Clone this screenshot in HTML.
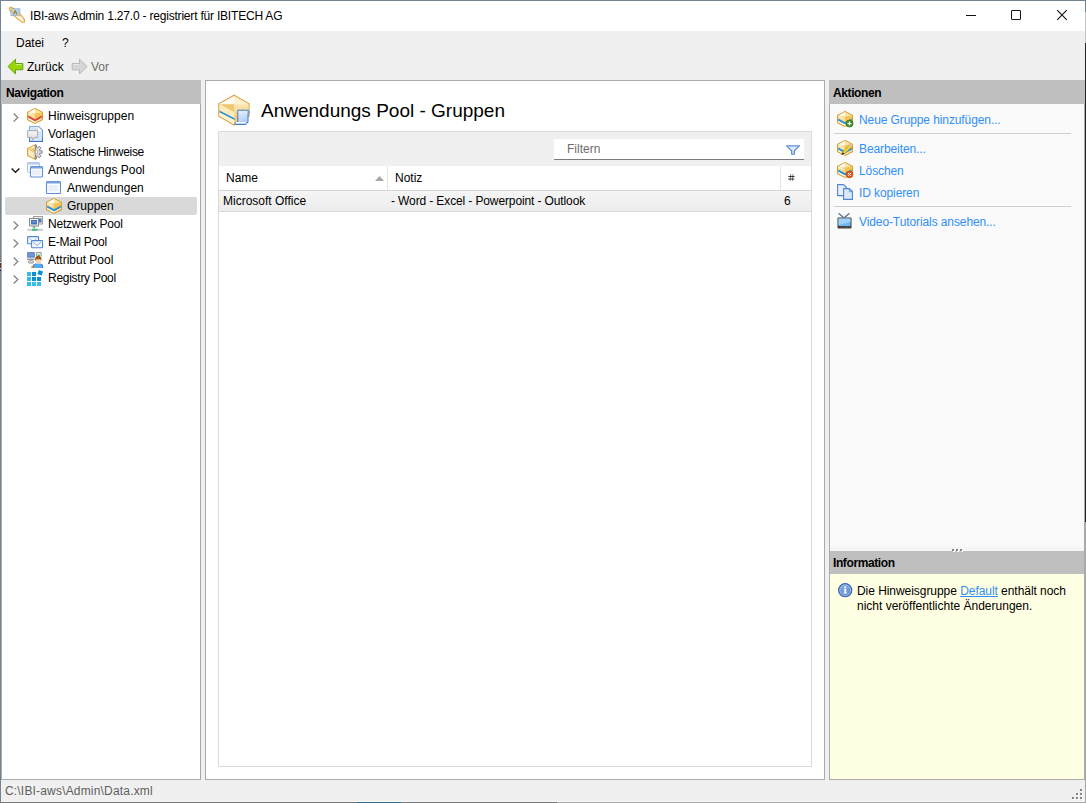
<!DOCTYPE html>
<html><head><meta charset="utf-8">
<style>
*{margin:0;padding:0;box-sizing:border-box}
html,body{width:1086px;height:803px;overflow:hidden;background:#f0f0f0;font-family:"Liberation Sans",sans-serif;font-size:12px;color:#000}
.a{position:absolute}
.t{position:absolute;white-space:nowrap;font-size:12px;line-height:14px}
.b{font-weight:bold;letter-spacing:-0.4px}
.lk{color:#2f8ff8}
.al{letter-spacing:-0.1px}
svg{position:absolute;display:block;overflow:visible}
</style></head><body>
<!-- window border -->
<div class="a" style="left:0;top:0;width:1086px;height:1px;background:#6f8596"></div>
<div class="a" style="left:0;top:0;width:1px;height:803px;background:#6f8596"></div>
<div class="a" style="left:1085px;top:0;width:1px;height:12px;background:#6f8596"></div>
<div class="a" style="left:1085px;top:12px;width:1px;height:31px;background:#c4c4c4"></div>
<div class="a" style="left:1085px;top:43px;width:1px;height:479px;background:#222"></div>
<div class="a" style="left:1085px;top:522px;width:1px;height:281px;background:#a9a9a9"></div>
<div class="a" style="left:1px;top:801px;width:1084px;height:1px;background:#f9f9f9"></div>
<div class="a" style="left:0;top:802px;width:557px;height:1px;background:#737373"></div>
<div class="a" style="left:357px;top:802px;width:44px;height:1px;background:#2c6c96"></div>
<div class="a" style="left:557px;top:802px;width:529px;height:1px;background:#a8a8a8"></div>
<div class="a" style="left:0;top:261px;width:1px;height:10px;background:linear-gradient(#3a6fb0 0,#3a6fb0 10%,#e8e0b0 10%,#e8e0b0 20%,#6a1a1a 20%,#8a2a1a 70%,#d8d090 70%,#d8d090 80%,#2a60a0 80%,#2a60a0 90%,#333 90%)"></div>
<!-- title bar -->
<div class="a" style="left:1px;top:1px;width:1084px;height:30px;background:#fff"></div>
<div class="a" style="left:4px;top:3px;width:24px;height:24px"><svg width="24" height="24" viewBox="0 0 24 24" style="left:0;top:0">
<ellipse cx="13" cy="11.8" rx="10.3" ry="2.6" transform="rotate(44 13 11.8)" fill="#fff8e6" stroke="#eaa844" stroke-width="1.2"/>
<rect x="7" y="5.8" width="9" height="7" fill="#b3cff0" stroke="#7896b8" stroke-width="0.5"/>
<path d="M6.5 5.5L16.5 13.5" stroke="#f3c878" stroke-width="1.4" opacity="0.8"/>
<path d="M9.5 11.2L11.2 7.8L13 11.2" fill="none" stroke="#9a8414" stroke-width="1.3"/>
</svg></div>
<div class="t" style="left:30px;top:9px;letter-spacing:-0.2px">IBI-aws Admin 1.27.0 - registriert für IBITECH AG</div>
<!-- window buttons -->
<div class="a" style="left:966px;top:15px;width:10px;height:1px;background:#111"></div>
<div class="a" style="left:1011px;top:10px;width:10px;height:10px;border:1px solid #111;border-radius:1px"></div>
<svg style="left:1057px;top:10px" width="10" height="10" viewBox="0 0 10 10"><path d="M0.2 0.2L9.8 9.8M9.8 0.2L0.2 9.8" stroke="#111" stroke-width="1.1"/></svg>

<!-- menu -->
<div class="t" style="left:16px;top:36px">Datei</div>
<div class="t" style="left:62px;top:36px">?</div>
<!-- toolbar -->
<div class="a" style="left:7px;top:59px;width:16px;height:16px"><svg width="16" height="16" viewBox="0 0 16 16" style="left:0;top:0">
<path d="M1 7.5L8.5 0.2V4.5H15.8V10.8H8.5V15L1 7.5Z" fill="#9ad600" stroke="#5fa515" stroke-width="1" stroke-linejoin="round"/>
<path d="M8.8 5.6H14.6" stroke="#d8f39a" stroke-width="0.9"/>
</svg></div>
<div class="t" style="left:27px;top:60px">Zurück</div>
<div class="a" style="left:72px;top:59px;width:16px;height:16px"><svg width="16" height="16" viewBox="0 0 16 16" style="left:0;top:0">
<path d="M15 7.5L7.5 0.2V4.5H0.2V10.8H7.5V15L15 7.5Z" fill="#d6d6d6" stroke="#b8b8b8" stroke-width="1" stroke-linejoin="round"/>
<path d="M1.4 5.6H7.2" stroke="#ececec" stroke-width="0.9"/>
</svg></div>
<div class="t" style="left:91px;top:60px;color:#6d6d6d">Vor</div>

<!-- NAV PANEL -->
<div class="a" style="left:1px;top:80px;width:200px;height:700px;border:1px solid #aaaaaa;border-top:none;background:#fff"></div>
<div class="a" style="left:1px;top:80px;width:200px;height:24px;background:#bfbfbf"></div>
<div class="t b" style="left:6px;top:86px">Navigation</div>
<div class="a" style="left:5px;top:197px;width:192px;height:18px;background:#d9d9d9;border-radius:2px"></div>
<div class="t" style="left:48px;top:109px">Hinweisgruppen</div>
<div class="a" style="left:27px;top:108px;width:16px;height:16px"><svg width="16" height="16" viewBox="0 0 16 16" style="left:0;top:0">
<path d="M8 0.6L15.4 4.4V11.6L8 15.4L0.6 11.6V4.4Z" fill="#fff3c8" stroke="#d49b30" stroke-width="1.1"/>
<path d="M1.2 4.6L8 1.1L8 5.2Z" fill="#fffdf2"/>
<path d="M1.2 4.8L8 5.2L8 11.8L1.2 8.3Z" fill="#f4d693"/>
<path d="M1.2 4.8L5 5L8 9L1.2 7Z" fill="#fbe9bb"/>
<path d="M8 1.1L14.8 4.6V8.3L8 11.8Z" fill="#f3c452"/>
<path d="M8 1.1L14.8 4.6L8 5.5Z" fill="#fbe3a0"/>
<path d="M1.2 7.6L8 11.2L14.8 7.6V9.8L8 13.4L1.2 9.8Z" fill="#d8473a"/>
<path d="M1.2 10L8 13.6V14.8L1.2 11.2Z" fill="#fffbe6"/>
</svg></div>
<svg style="left:13px;top:113px" width="6" height="9" viewBox="0 0 6 9"><path d="M0.7 0.5L4.8 4.5L0.7 8.5" fill="none" stroke="#858585" stroke-width="1.3"/></svg>
<div class="t" style="left:48px;top:127px">Vorlagen</div>
<div class="a" style="left:27px;top:126px;width:16px;height:16px"><svg width="16" height="16" viewBox="0 0 16 16" style="left:0;top:0">
<defs><linearGradient id="vdo" x1="0" y1="0" x2="0" y2="1"><stop offset="0" stop-color="#86aee6"/><stop offset="1" stop-color="#3b73c9"/></linearGradient>
<linearGradient id="vbu" x1="0" y1="0" x2="0" y2="1"><stop offset="0" stop-color="#f6f6f6"/><stop offset="1" stop-color="#dedede"/></linearGradient></defs>
<path d="M2.6 0.6H11.8L15.4 4.2V15.4H2.6Z" fill="#ffffff" stroke="url(#vdo)" stroke-width="1.2" stroke-linejoin="round"/>
<path d="M4 2H11V5.2H14V14H4Z" fill="#d3e5fb"/>
<path d="M0.6 4.6H10.6V11.4H7.6L5.4 14.4L5.2 11.4H0.6Z" fill="url(#vbu)" stroke="#ababab" stroke-width="1" stroke-linejoin="round"/>
</svg></div>
<div class="t" style="left:48px;top:145px;letter-spacing:-0.3px">Statische Hinweise</div>
<div class="a" style="left:27px;top:144px;width:16px;height:16px"><svg width="16" height="16" viewBox="0 0 16 16" style="left:0;top:0">
<path d="M8.3 0.8V15.4L0.6 11.5V4.6Z" fill="#fbecc4" stroke="#d9a233" stroke-width="1.1"/>
<path d="M1.3 5L8.3 1.6V9.6Z" fill="#f0c868"/>
<path d="M1.3 5L8.3 1.6V4Z" fill="#fdf3d6"/>
<path d="M8.30 1.10 L8.74 1.11 L9.18 1.16 L9.62 1.23 L9.41 3.54 L9.85 3.67 L10.27 3.84 L10.67 4.06 L12.16 2.28 L12.86 2.82 L13.48 3.44 L14.02 4.14 L12.24 5.63 L12.46 6.03 L12.63 6.45 L12.76 6.89 L15.07 6.68 L15.19 7.56 L15.19 8.44 L15.07 9.32 L12.76 9.11 L12.63 9.55 L12.46 9.97 L12.24 10.37 L14.02 11.86 L13.48 12.56 L12.86 13.18 L12.16 13.72 L10.67 11.94 L10.27 12.16 L9.85 12.33 L9.41 12.46 L9.62 14.77 L9.18 14.84 L8.74 14.89 L8.30 14.90 Z" fill="#e2e2e2" stroke="#777" stroke-width="0.9" stroke-linejoin="round"/>
<path d="M8.3 5.6A2.4 2.4 0 0 1 8.3 10.4Z" fill="#ffffff" stroke="#8a8a8a" stroke-width="0.6"/>
</svg></div>
<div class="t" style="left:48px;top:163px">Anwendungs Pool</div>
<div class="a" style="left:27px;top:162px;width:16px;height:16px"><svg width="16" height="16" viewBox="0 0 16 16" style="left:0;top:0">
<rect x="0.5" y="0.5" width="12" height="10" rx="1" fill="#f6f9fd" stroke="#a9c3ea" stroke-width="1"/>
<rect x="0.5" y="0.5" width="12" height="2" fill="#b6cdef"/>
<rect x="3.5" y="4.5" width="12" height="10.5" rx="1" fill="#fff" stroke="#5f8fd6" stroke-width="1.1"/>
<rect x="3.5" y="4.5" width="12" height="2" fill="#77a1e0"/>
<rect x="5" y="7.5" width="9" height="6" fill="#eaeff8"/>
</svg></div>
<svg style="left:11px;top:168px" width="9" height="6" viewBox="0 0 9 6"><path d="M0.6 0.4L4.5 4.3L8.4 0.4" fill="none" stroke="#1e1e1e" stroke-width="1.45"/></svg>
<div class="t" style="left:67px;top:181px">Anwendungen</div>
<div class="a" style="left:46px;top:180px;width:16px;height:16px"><svg width="16" height="16" viewBox="0 0 16 16" style="left:0;top:0">
<rect x="0.5" y="1.5" width="14" height="12" rx="1" fill="#fff" stroke="#5f8fd6" stroke-width="1.1"/>
<rect x="0.5" y="1.5" width="14" height="2" fill="#77a1e0"/>
<rect x="2.5" y="5" width="10" height="6.5" fill="#eaeff8"/>
</svg></div>
<div class="t" style="left:67px;top:199px">Gruppen</div>
<div class="a" style="left:46px;top:198px;width:16px;height:16px"><svg width="16" height="16" viewBox="0 0 16 16" style="left:0;top:0">
<path d="M8 0.6L15.4 4.4V11.6L8 15.4L0.6 11.6V4.4Z" fill="#fff3c8" stroke="#d49b30" stroke-width="1.1"/>
<path d="M1.2 4.6L8 1.1L8 5.2Z" fill="#fffdf2"/>
<path d="M1.2 4.8L8 5.2L8 11.8L1.2 8.3Z" fill="#f4d693"/>
<path d="M1.2 4.8L5 5L8 9L1.2 7Z" fill="#fbe9bb"/>
<path d="M8 1.1L14.8 4.6V8.3L8 11.8Z" fill="#f3c452"/>
<path d="M8 1.1L14.8 4.6L8 5.5Z" fill="#fbe3a0"/>
<path d="M1.2 7.6L8 11.2L14.8 7.6V9.8L8 13.4L1.2 9.8Z" fill="#2a90d4"/>
<path d="M1.2 10L8 13.6V14.8L1.2 11.2Z" fill="#fffbe6"/>
</svg></div>
<div class="t" style="left:48px;top:217px;letter-spacing:-0.2px">Netzwerk Pool</div>
<div class="a" style="left:27px;top:216px;width:16px;height:16px"><svg width="16" height="16" viewBox="0 0 16 16" style="left:0;top:0">
<rect x="6.5" y="0.5" width="9" height="7.5" fill="#ececec" stroke="#a0a0a0" stroke-width="1"/>
<rect x="12" y="2.5" width="2.5" height="4" fill="#4a78c4"/>
<rect x="2.5" y="2.5" width="9" height="7.5" fill="#f2f2f2" stroke="#8c8c8c" stroke-width="1"/>
<rect x="4" y="4" width="6" height="4.5" fill="#4673c0"/>
<rect x="4.8" y="5" width="4.4" height="1.6" fill="#6a92d4"/>
<path d="M5 10.8H9" stroke="#b0b0b0" stroke-width="1"/>
<rect x="6.3" y="10.5" width="1.6" height="2" fill="#3cbc7c"/>
<rect x="0.5" y="12.8" width="15.5" height="2" fill="#c8ccce"/>
<rect x="5" y="12.8" width="5.5" height="2" fill="#40c080"/>
</svg></div>
<svg style="left:13px;top:221px" width="6" height="9" viewBox="0 0 6 9"><path d="M0.7 0.5L4.8 4.5L0.7 8.5" fill="none" stroke="#858585" stroke-width="1.3"/></svg>
<div class="t" style="left:48px;top:235px;letter-spacing:-0.23px">E-Mail Pool</div>
<div class="a" style="left:27px;top:234px;width:16px;height:16px"><svg width="16" height="16" viewBox="0 0 16 16" style="left:0;top:0">
<rect x="0.6" y="2.6" width="11" height="7.2" rx="0.6" fill="#f4f8fe" stroke="#5287d4" stroke-width="1.1"/>
<path d="M2.2 4.2L6 7.6L9.8 4.2" fill="none" stroke="#8db0e6" stroke-width="0.8"/>
<rect x="4.6" y="6.6" width="11" height="7.2" rx="0.6" fill="#f7faff" stroke="#5287d4" stroke-width="1.1"/>
<path d="M6.2 8.2L10.1 11.6L14 8.2" fill="none" stroke="#6a98dc" stroke-width="0.85"/>
</svg></div>
<svg style="left:13px;top:239px" width="6" height="9" viewBox="0 0 6 9"><path d="M0.7 0.5L4.8 4.5L0.7 8.5" fill="none" stroke="#858585" stroke-width="1.3"/></svg>
<div class="t" style="left:48px;top:253px">Attribut Pool</div>
<div class="a" style="left:27px;top:252px;width:16px;height:16px"><svg width="16" height="16" viewBox="0 0 16 16" style="left:0;top:0">
<rect x="0.2" y="0.2" width="7.6" height="5.4" fill="#4b77bd"/>
<rect x="1.2" y="1.2" width="5.6" height="3.4" fill="#7199d8"/>
<rect x="0" y="6" width="7.5" height="2" fill="#c9c9c9"/>
<path d="M0 7.5H7.5" stroke="#8a8a8a" stroke-width="0.7"/>
<rect x="1.5" y="8.8" width="5" height="2.2" rx="1" fill="#f4f4f4" stroke="#7a7a7a" stroke-width="0.9"/>
<path d="M9.4 4.5V0.5H14.2V4.5" fill="#eeeeee" stroke="#8a8a8a" stroke-width="0.9"/>
<path d="M10.6 4.5C10.6 3 11 2.5 12 2.5C12.6 2.5 12.8 3 12.8 4.5Z" fill="#3aa63a"/>
<path d="M5.5 16C5.8 13 7 11.6 11.2 11.6C15.2 11.6 16 13 16 16Z" fill="#52aaf4"/>
<path d="M6 15.8C6.3 13 7.2 11.8 8.6 11.6M15.8 15.8C15.6 13 15 11.8 13.8 11.6" fill="none" stroke="#2440b8" stroke-width="0.9" stroke-dasharray="0.9 0.7"/>
<ellipse cx="11.3" cy="8.6" rx="3" ry="2.8" fill="#f7d2ac"/>
<path d="M8 8.5C7.8 5.2 9.5 4 11.3 4C13.5 4 14.8 5.3 14.6 8.5L13.8 7.6C12.8 7.2 11 7 9 7.4Z" fill="#9a5416"/>
<rect x="4.4" y="13.8" width="2" height="2.2" fill="#ec8a1e"/>
</svg></div>
<svg style="left:13px;top:257px" width="6" height="9" viewBox="0 0 6 9"><path d="M0.7 0.5L4.8 4.5L0.7 8.5" fill="none" stroke="#858585" stroke-width="1.3"/></svg>
<div class="t" style="left:48px;top:271px;letter-spacing:-0.27px">Registry Pool</div>
<div class="a" style="left:27px;top:270px;width:16px;height:16px"><svg width="16" height="16" viewBox="0 0 16 16" style="left:0;top:0">
<rect x="0" y="2" width="4" height="4" fill="#33bbef"/>
<rect x="5" y="2" width="4" height="4" fill="#0a90d0"/>
<rect x="0" y="7" width="4" height="4" fill="#33bbef"/>
<rect x="5" y="7" width="4" height="4" fill="#0a90d0"/>
<rect x="10" y="7" width="4" height="4" fill="#0a90d0"/>
<rect x="0" y="12" width="4" height="4" fill="#33bbef"/>
<rect x="5" y="12" width="4" height="4" fill="#33bbef"/>
<rect x="10" y="12" width="4" height="4" fill="#38bdf0"/>
<rect x="11" y="0.6" width="4.4" height="4.4" fill="#0a90d0" transform="rotate(18 13.2 2.8)"/>
</svg></div>
<svg style="left:13px;top:275px" width="6" height="9" viewBox="0 0 6 9"><path d="M0.7 0.5L4.8 4.5L0.7 8.5" fill="none" stroke="#858585" stroke-width="1.3"/></svg>

<!-- CENTER PANEL -->
<div class="a" style="left:205px;top:80px;width:620px;height:700px;border:1px solid #aaaaaa;background:#fff"></div>
<div class="a" style="left:218px;top:94px;width:32px;height:32px"><svg width="32" height="32" viewBox="0 0 32 32" style="left:0;top:0">
<defs>
<linearGradient id="scr" x1="0" y1="0" x2="0.3" y2="1"><stop offset="0" stop-color="#f2f7fe"/><stop offset="1" stop-color="#a9c9f1"/></linearGradient>
<linearGradient id="rf" x1="0" y1="0" x2="0" y2="1"><stop offset="0" stop-color="#fbe8b8"/><stop offset="1" stop-color="#f0c050"/></linearGradient>
</defs>
<path d="M16.2 1.2L31 9.9V22.2L16.2 31L0.8 22.2V9.9Z" fill="#fcefc6" stroke="#d8a247" stroke-width="1.2"/>
<path d="M1.5 10L16.2 1.9V10.2Z" fill="#fffaee"/>
<path d="M1.8 10.3L16.2 10.2V18.2Z" fill="#eec676"/>
<path d="M16.2 1.9L30.4 10.1L16.2 10.2Z" fill="#fdf0cf"/>
<path d="M16.2 10.2L30.4 10.1V22L16.2 30.2Z" fill="url(#rf)"/>
<path d="M1.5 10.6L16.2 18.4V30.2L1.5 21.8Z" fill="#fcebbb"/>
<path d="M1.5 16.6L16.6 24.3V26L1.5 18.4Z" fill="#2a90d2"/>
<path d="M1.5 18.6L16.2 26.2V30L1.5 21.8Z" fill="#fff4d2"/>
<path d="M19.8 16.2H29.8C31.6 16.2 31.6 19.6 30 20.2V28.5H28.3C28.8 29.5 28.5 30.5 27.5 30.5H17.6C16.4 30.5 16.4 28.4 17.6 28.4H19.8Z" fill="url(#scr)" stroke="#3f7bcf" stroke-width="1"/>
<path d="M17.8 28.6H28.2" stroke="#ffffff" stroke-width="1.2"/>
<path d="M29.2 16.8C30.5 17.2 30.5 19.2 29.2 19.6" fill="none" stroke="#6c9ade" stroke-width="0.8"/>
</svg></div>
<div class="t" style="left:261px;top:100px;font-size:19px;line-height:22px">Anwendungs Pool - Gruppen</div>
<!-- grid -->
<div class="a" style="left:218px;top:131px;width:594px;height:636px;border:1px solid #dadada;background:#fff"></div>
<div class="a" style="left:219px;top:132px;width:592px;height:34px;background:#f0f0f0"></div>
<div class="a" style="left:554px;top:139px;width:250px;height:21px;background:#fff;border-bottom:1px solid #7a7a7a"></div>
<div class="t" style="left:567px;top:142px;color:#6d6d6d">Filtern</div>
<div class="a" style="left:786px;top:145px;width:14px;height:10px"><svg width="14" height="10" viewBox="0 0 14 10" style="left:0;top:0">
<path d="M0.6 0.8H13.4L8.3 5.8V9.3H5.7V5.8Z" fill="#dbe9fb" stroke="#4a7fd0" stroke-width="1.1" stroke-linejoin="round"/>
<path d="M1 1H13" stroke="#8db2e8" stroke-width="1"/>
</svg></div>
<div class="a" style="left:219px;top:166px;width:591px;height:24px;background:#fff"></div>
<div class="a" style="left:387px;top:166px;width:1px;height:24px;background:#e5e5e5"></div>
<div class="a" style="left:780px;top:166px;width:1px;height:24px;background:#e5e5e5"></div>
<div class="a" style="left:219px;top:190px;width:592px;height:1px;background:#d5d5d5"></div>
<div class="a" style="left:219px;top:191px;width:592px;height:20px;background:linear-gradient(#f5f5f5,#ececec)"></div>
<div class="a" style="left:219px;top:211px;width:592px;height:1px;background:#d9d9d9"></div>
<div class="t" style="left:226px;top:171px">Name</div>
<div class="t" style="left:395px;top:171px">Notiz</div>
<svg style="left:788px;top:174px" width="7" height="7" viewBox="0 0 7 7"><path d="M2.7 0.2L2.1 6.8M5 0.2L4.4 6.8" stroke="#555" stroke-width="0.8"/><path d="M0.4 2.5H6.6M0.2 5H6.4" stroke="#222" stroke-width="0.9"/></svg>
<svg style="left:375px;top:176px" width="9" height="5" viewBox="0 0 9 5"><path d="M4.5 0L9 5H0Z" fill="#a6a6a6"/></svg>
<div class="t" style="left:223px;top:194px">Microsoft Office</div>
<div class="t" style="left:391px;top:194px;letter-spacing:-0.12px">- Word - Excel - Powerpoint - Outlook</div>
<div class="t" style="left:784px;top:194px">6</div>

<!-- RIGHT PANEL -->
<div class="a" style="left:829px;top:80px;width:256px;height:700px;border:1px solid #aaaaaa;border-top:none;border-right:1px solid #aaaaaa;background:#fafafa"></div>
<div class="a" style="left:829px;top:80px;width:256px;height:24px;background:#bfbfbf"></div>
<div class="t b" style="left:833px;top:86px">Aktionen</div>
<div class="a" style="left:837px;top:111px;width:16px;height:16px"><svg width="16" height="16" viewBox="0 0 16 16" style="left:0;top:0">
<path d="M8 0.6L15.4 4.4V11.6L8 15.4L0.6 11.6V4.4Z" fill="#fff3c8" stroke="#d49b30" stroke-width="1.1"/>
<path d="M1.2 4.6L8 1.1L8 5.2Z" fill="#fffdf2"/>
<path d="M1.2 4.8L8 5.2L8 11.8L1.2 8.3Z" fill="#f4d693"/>
<path d="M1.2 4.8L5 5L8 9L1.2 7Z" fill="#fbe9bb"/>
<path d="M8 1.1L14.8 4.6V8.3L8 11.8Z" fill="#f3c452"/>
<path d="M8 1.1L14.8 4.6L8 5.5Z" fill="#fbe3a0"/>
<path d="M1.2 7.6L8 11.2L14.8 7.6V9.8L8 13.4L1.2 9.8Z" fill="#2a90d4"/>
<path d="M1.2 10L8 13.6V14.8L1.2 11.2Z" fill="#fffbe6"/>
<circle cx="12.5" cy="12.5" r="3.5" fill="#45952a" stroke="#2f7418" stroke-width="0.8"/><path d="M12.5 10.5V14.5M10.5 12.5H14.5" stroke="#fff" stroke-width="1.2"/></svg></div>
<div class="a" style="left:837px;top:140px;width:16px;height:16px"><svg width="16" height="16" viewBox="0 0 16 16" style="left:0;top:0">
<path d="M8 0.6L15.4 4.4V11.6L8 15.4L0.6 11.6V4.4Z" fill="#fff3c8" stroke="#d49b30" stroke-width="1.1"/>
<path d="M1.2 4.6L8 1.1L8 5.2Z" fill="#fffdf2"/>
<path d="M1.2 4.8L8 5.2L8 11.8L1.2 8.3Z" fill="#f4d693"/>
<path d="M1.2 4.8L5 5L8 9L1.2 7Z" fill="#fbe9bb"/>
<path d="M8 1.1L14.8 4.6V8.3L8 11.8Z" fill="#f3c452"/>
<path d="M8 1.1L14.8 4.6L8 5.5Z" fill="#fbe3a0"/>
<path d="M1.2 7.6L8 11.2L14.8 7.6V9.8L8 13.4L1.2 9.8Z" fill="#2a90d4"/>
<path d="M1.2 10L8 13.6V14.8L1.2 11.2Z" fill="#fffbe6"/>
<path d="M4.5 14.5L6 11.5L13 4.5L15 6.5L8 13.5Z" fill="#f2d638" stroke="#b08a2a" stroke-width="0.7"/><path d="M4.3 14.8L5.8 12.2L7.6 13.8Z" fill="#3a2a1a"/><circle cx="14" cy="5.5" r="1.3" fill="#f0c0b0"/></svg></div>
<div class="a" style="left:837px;top:162px;width:16px;height:16px"><svg width="16" height="16" viewBox="0 0 16 16" style="left:0;top:0">
<path d="M8 0.6L15.4 4.4V11.6L8 15.4L0.6 11.6V4.4Z" fill="#fff3c8" stroke="#d49b30" stroke-width="1.1"/>
<path d="M1.2 4.6L8 1.1L8 5.2Z" fill="#fffdf2"/>
<path d="M1.2 4.8L8 5.2L8 11.8L1.2 8.3Z" fill="#f4d693"/>
<path d="M1.2 4.8L5 5L8 9L1.2 7Z" fill="#fbe9bb"/>
<path d="M8 1.1L14.8 4.6V8.3L8 11.8Z" fill="#f3c452"/>
<path d="M8 1.1L14.8 4.6L8 5.5Z" fill="#fbe3a0"/>
<path d="M1.2 7.6L8 11.2L14.8 7.6V9.8L8 13.4L1.2 9.8Z" fill="#2a90d4"/>
<path d="M1.2 10L8 13.6V14.8L1.2 11.2Z" fill="#fffbe6"/>
<circle cx="12.5" cy="12.4" r="3.4" fill="#e3581c" stroke="#bb4010" stroke-width="0.7"/><path d="M11.1 11L13.9 13.8M13.9 11L11.1 13.8" stroke="#fff" stroke-width="1"/></svg></div>
<div class="a" style="left:837px;top:184px;width:16px;height:16px"><svg width="16" height="16" viewBox="0 0 16 16" style="left:0;top:0">
<path d="M0.6 0.6H6.5L9.5 3.5V11.6H0.6Z" fill="#e7f0fc" stroke="#4f84d4" stroke-width="1.1" stroke-linejoin="round"/>
<path d="M6.6 4.6H12.5L15.4 7.5V15.4H6.6Z" fill="#dce9fb" stroke="#4f84d4" stroke-width="1.1" stroke-linejoin="round"/>
<path d="M12.3 4.8V7.7H15.2" fill="none" stroke="#4f84d4" stroke-width="0.8"/>
</svg></div>
<div class="a" style="left:837px;top:213px;width:16px;height:16px"><svg width="16" height="16" viewBox="0 0 16 16" style="left:0;top:0">
<path d="M1.5 0.3L6.5 4.5M12.5 0.3L7.5 4.5" stroke="#5a6f8f" stroke-width="1.2"/>
<rect x="0.5" y="4.5" width="14" height="11" rx="1" fill="#3a3a3a"/>
<rect x="1.5" y="5.5" width="12" height="7.5" fill="#6db8f0"/>
<path d="M1.5 5.5H13.5V9L1.5 12Z" fill="#9fd1f8"/>
<rect x="3" y="13.7" width="1.5" height="1" fill="#e02020"/>
<path d="M5.5 14.2H13" stroke="#888" stroke-width="0.8" stroke-dasharray="1 1.2"/>
</svg></div>
<div class="t lk al" style="left:859px;top:113px">Neue Gruppe hinzufügen...</div>
<div class="a" style="left:834px;top:133px;width:237px;height:1px;background:#d0d0d0"></div>
<div class="t lk al" style="left:859px;top:142px">Bearbeiten...</div>
<div class="t lk al" style="left:859px;top:164px">Löschen</div>
<div class="t lk al" style="left:859px;top:186px">ID kopieren</div>
<div class="a" style="left:834px;top:206px;width:237px;height:1px;background:#d0d0d0"></div>
<div class="t lk al" style="left:859px;top:215px">Video-Tutorials ansehen...</div>

<div class="a" style="left:830px;top:547px;width:254px;height:4px;background:#f5f5f5"></div>
<div class="a" style="left:830px;top:551px;width:254px;height:23px;background:#bfbfbf"></div>
<div class="t b" style="left:833px;top:556px">Information</div>
<div class="a" style="left:830px;top:574px;width:254px;height:205px;background:#ffffe3"></div>
<div class="a" style="left:838px;top:583px;width:15px;height:15px"><svg width="15" height="15" viewBox="0 0 15 15" style="left:0;top:0">
<defs><radialGradient id="ig" cx="0.45" cy="0.35" r="0.65"><stop offset="0" stop-color="#86aee2"/><stop offset="1" stop-color="#5582c6"/></radialGradient></defs>
<circle cx="7.2" cy="7.2" r="6.6" fill="url(#ig)" stroke="#3462b4" stroke-width="1.1"/>
<circle cx="7.2" cy="7.2" r="5.3" fill="none" stroke="#b3cdf0" stroke-width="0.8"/>
<rect x="6.4" y="3.5" width="1.8" height="1.5" fill="#fff"/>
<path d="M6.4 5.8H8.2V9.6H9.1V10.6H5.4V9.6H6.4Z" fill="#fff"/>
</svg></div>
<div class="t" style="left:857px;top:584px;letter-spacing:-0.05px">Die Hinweisgruppe <span class="lk" style="text-decoration:underline">Default</span> enthält noch</div>
<div class="t" style="left:857px;top:599px">nicht veröffentlichte Änderungen.</div>

<!-- status bar -->
<div class="a" style="left:953px;top:550px;width:2px;height:2px;background:#fff"></div><div class="a" style="left:952px;top:549px;width:2px;height:2px;background:#858585"></div>
<div class="a" style="left:957px;top:550px;width:2px;height:2px;background:#fff"></div><div class="a" style="left:956px;top:549px;width:2px;height:2px;background:#858585"></div>
<div class="a" style="left:961px;top:550px;width:2px;height:2px;background:#fff"></div><div class="a" style="left:960px;top:549px;width:2px;height:2px;background:#858585"></div>
<div class="a" style="left:1081px;top:790px;width:2px;height:2px;background:#fff"></div><div class="a" style="left:1080px;top:789px;width:2px;height:2px;background:#858585"></div>
<div class="a" style="left:1077px;top:794px;width:2px;height:2px;background:#fff"></div><div class="a" style="left:1076px;top:793px;width:2px;height:2px;background:#858585"></div>
<div class="a" style="left:1081px;top:794px;width:2px;height:2px;background:#fff"></div><div class="a" style="left:1080px;top:793px;width:2px;height:2px;background:#858585"></div>
<div class="a" style="left:1073px;top:798px;width:2px;height:2px;background:#fff"></div><div class="a" style="left:1072px;top:797px;width:2px;height:2px;background:#858585"></div>
<div class="a" style="left:1077px;top:798px;width:2px;height:2px;background:#fff"></div><div class="a" style="left:1076px;top:797px;width:2px;height:2px;background:#858585"></div>
<div class="a" style="left:1081px;top:798px;width:2px;height:2px;background:#fff"></div><div class="a" style="left:1080px;top:797px;width:2px;height:2px;background:#858585"></div>
<div class="t" style="left:5px;top:784px;color:#5f5f5f;letter-spacing:0.18px">C:\IBI-aws\Admin\Data.xml</div>
</body></html>
